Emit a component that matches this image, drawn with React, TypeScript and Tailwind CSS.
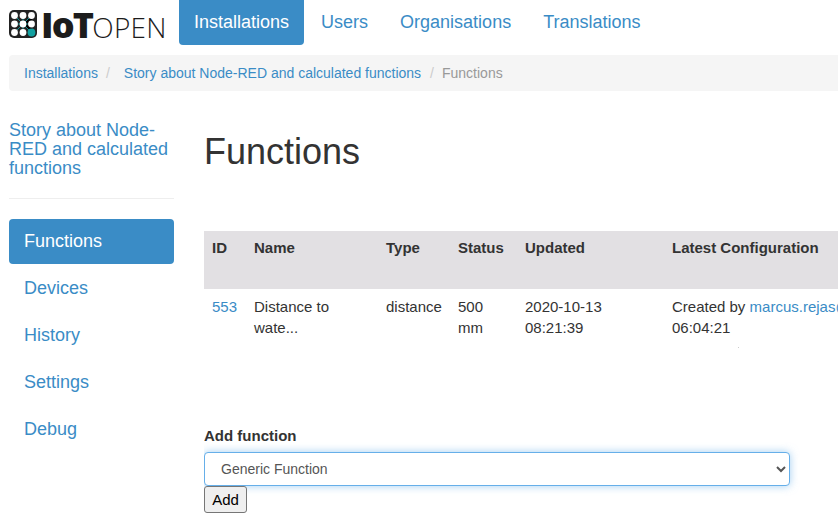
export default function App() {
  return (
    <div className="h-[532px] w-[838px] overflow-hidden bg-white font-['Liberation_Sans',sans-serif] text-[15px] leading-[20px] text-[#333]">
      {/* Navbar */}
      <nav className="flex h-[45px] pl-[9px]">
        <div className="flex w-[170px] items-start pt-[10px]">
          <svg className="h-[28px] w-[28px] shrink-0" viewBox="0 0 28 28">
            <rect x="0" y="0" width="28" height="28" rx="5" fill="#222" />
            <path d="M5 5L14 14M14 5V23M23 5L14 14L23 23M5 14H23M5 23L14 14" stroke="#0f8f90" strokeWidth="1" />
            <circle cx="5.5" cy="5.5" r="3.4" fill="#fff" />
            <circle cx="14" cy="5.5" r="3.4" fill="#fff" />
            <circle cx="22.5" cy="5.5" r="3.4" fill="#fff" />
            <circle cx="5.5" cy="14" r="3.4" fill="#fff" />
            <circle cx="14" cy="14" r="3.4" fill="#fff" />
            <circle cx="22.5" cy="14" r="3.4" fill="#fff" />
            <circle cx="5.5" cy="22.5" r="3.4" fill="#fff" />
            <circle cx="14" cy="22.5" r="3.4" fill="#fff" />
            <circle cx="22.5" cy="22.5" r="3.9" fill="#12a0a0" />
          </svg>
          <span className="ml-[4px] flex items-baseline whitespace-nowrap leading-[30px] text-[#1c1c1c]">
            <span className="font-['Open_Sans',sans-serif] text-[36px] font-extrabold tracking-[-1.8px]">IoT</span>
            <span className="font-['Open_Sans',sans-serif] text-[28px] font-light tracking-[0.2px]">OPEN</span>
          </span>
        </div>
        <a className="rounded-b-[4px] bg-[#3a8cc6] px-[15px] pt-[12px] text-[18px] text-white">Installations</a>
        <a className="ml-[2px] px-[15px] pt-[12px] text-[18px] text-[#3a8cc6]">Users</a>
        <a className="ml-[2px] px-[15px] pt-[12px] text-[18px] text-[#3a8cc6]">Organisations</a>
        <a className="ml-[2px] px-[15px] pt-[12px] text-[18px] text-[#3a8cc6]">Translations</a>
      </nav>

      {/* Breadcrumb */}
      <div className="mt-[10px] ml-[9px] flex h-[36px] items-center rounded-l-[4px] bg-[#f5f5f5] px-[15px] text-[14px] whitespace-nowrap">
        <a className="text-[#3a8cc6]">Installations</a>
        <span className="pr-[13px] pl-[8px] text-[#ccc]">/</span>
        <a className="ml-[1px] text-[#3a8cc6]">Story about Node-RED and calculated functions</a>
        <span className="pr-[8px] pl-[9px] text-[#ccc]">/</span>
        <span className="text-[#999]">Functions</span>
      </div>

      <div className="flex">
        {/* Sidebar */}
        <aside className="ml-[9px] w-[165px] shrink-0 pt-[30px]">
          <a className="block text-[18px] leading-[19px] text-[#3a8cc6]">Story about Node-RED and calculated functions</a>
          <hr className="mt-[20px] border-[#eee]" />
          <ul className="mt-[20px] flex flex-col gap-[2px] text-[18px]">
            <li className="flex h-[45px] items-center rounded-[4px] bg-[#3a8cc6] px-[15px] pb-[1px] text-white">Functions</li>
            <li className="flex h-[45px] items-center px-[15px] pb-[1px] text-[#3a8cc6]">Devices</li>
            <li className="flex h-[45px] items-center px-[15px] pb-[1px] text-[#3a8cc6]">History</li>
            <li className="flex h-[45px] items-center px-[15px] pb-[1px] text-[#3a8cc6]">Settings</li>
            <li className="flex h-[45px] items-center px-[15px] pb-[1px] text-[#3a8cc6]">Debug</li>
          </ul>
        </aside>

        {/* Main */}
        <main className="ml-[30px] min-w-0 flex-1 overflow-hidden">
          <h1 className="mt-[41px] text-[36px] leading-[40px] font-normal">Functions</h1>

          <table className="mt-[59px] w-[760px] table-fixed border-collapse">
            <thead>
              <tr className="h-[58px] bg-[#e2e0e3] text-left align-top">
                <th className="w-[42px] pt-[7px] pl-[8px] font-bold">ID</th>
                <th className="w-[132px] pt-[7px] pl-[8px] font-bold">Name</th>
                <th className="w-[72px] pt-[7px] pl-[8px] font-bold">Type</th>
                <th className="w-[67px] pt-[7px] pl-[8px] font-bold">Status</th>
                <th className="w-[147px] pt-[7px] pl-[8px] font-bold">Updated</th>
                <th className="pt-[7px] pl-[8px] font-bold whitespace-nowrap">Latest Configuration</th>
              </tr>
            </thead>
            <tbody>
              <tr className="align-top">
                <td className="pt-[8px] pl-[8px] text-[#3a8cc6]">553</td>
                <td className="px-[8px] pt-[7px] leading-[21px]">Distance to wate...</td>
                <td className="pt-[8px] pl-[8px]">distance</td>
                <td className="px-[8px] pt-[7px] leading-[21px]">500 mm</td>
                <td className="px-[8px] pt-[7px] leading-[21px]">2020-10-13 08:21:39</td>
                <td className="pt-[7px] pl-[8px] leading-[21px] whitespace-nowrap">
                  Created by <a className="text-[#3a8cc6]">marcus.rejas@iotopen.se</a>
                  <br />
                  06:04:21
                  <span className="mt-[9px] ml-[66px] block h-px w-px bg-[#ccc]" />
                </td>
              </tr>
            </tbody>
          </table>

          <form className="mt-[78px] w-[586px]">
            <label className="block font-bold">Add function</label>
            <select className="mt-[6px] block h-[34px] w-full rounded-[4px] border border-[#66afe9] bg-white pl-[12px] text-[14px] text-[#555] shadow-[0_0_8px_rgba(102,175,233,0.6)] outline-none">
              <option>Generic Function</option>
            </select>
            <button type="button" className="block h-[27px] w-[43px] rounded-[3px] border border-[#767676] bg-[#efefef] text-[15px] text-black">Add</button>
          </form>
        </main>
      </div>
    </div>
  )
}
